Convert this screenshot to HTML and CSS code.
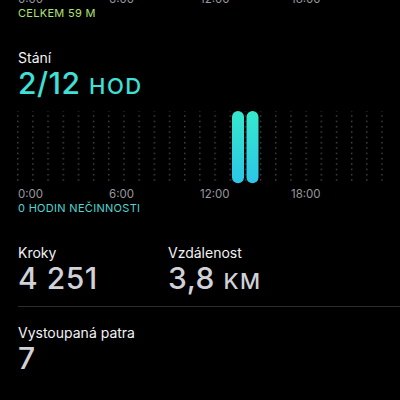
FILE: index.html
```html
<!DOCTYPE html>
<html lang="cs">
<head>
    <meta charset="UTF-8">
    <meta name="viewport" content="width=device-width, initial-scale=1.0">
    <title>Aktivita</title>
    <link rel="stylesheet" href="styles.css">
</head>
<body>
    <div class="page">
        <div class="axis axis-top">
            <span>0:00</span><span>6:00</span><span>12:00</span><span>18:00</span>
        </div>
        <div class="note note-green">CELKEM 59 M</div>

        <div class="label label-stand">Stání</div>
        <div class="ring-value">2/12 <span class="unit">HOD</span></div>

        <svg class="chart" width="366" height="76" viewBox="0 0 366 76">
            <defs>
                <pattern id="dots" patternUnits="userSpaceOnUse" width="15.18" height="5.33">
                    <rect x="0" y="0" width="1.4" height="1.4" fill="#4a4a4c"/>
                </pattern>
                <linearGradient id="standBar" x1="0" y1="0" x2="0" y2="1">
                    <stop offset="0" stop-color="#36e8cc"/>
                    <stop offset="1" stop-color="#2cc6e8"/>
                </linearGradient>
            </defs>
            <rect x="0" y="1" width="366" height="71" fill="url(#dots)"/>
            <rect x="215" y="1" width="12" height="72.3" rx="6" fill="url(#standBar)"/>
            <rect x="229.5" y="1" width="12" height="72.3" rx="6" fill="url(#standBar)"/>
        </svg>

        <div class="axis axis-bottom">
            <span>0:00</span><span>6:00</span><span>12:00</span><span>18:00</span>
        </div>
        <div class="note note-cyan">0 HODIN NEČINNOSTI</div>

        <div class="stats">
            <div class="stat">
                <div class="label">Kroky</div>
                <div class="stat-value">4 251</div>
            </div>
            <div class="stat">
                <div class="label">Vzdálenost</div>
                <div class="stat-value">3,8 <span class="unit">KM</span></div>
            </div>
        </div>
        <div class="divider"></div>
        <div class="stat stat-floors">
            <div class="label">Vystoupaná patra</div>
            <div class="stat-value">7</div>
        </div>
    </div>
</body>
</html>
```

FILE: styles.css
```css
body {
    margin: 0;
    padding: 0;
    background: #000;
    font-family: Inter, "Liberation Sans", sans-serif;
    overflow: hidden;
}
.page {
    padding-left: 18px;
    height: 400px;
}
.axis {
    display: grid;
    grid-template-columns: 91px 91px 91px 91px;
    font-size: 11.5px;
    line-height: 14px;
    color: #98989d;
}
.axis-top {
    margin-top: -8px;
}
.axis-bottom {
    margin-top: 1px;
}
.note {
    font-size: 11px;
    line-height: 14px;
    letter-spacing: 0.3px;
}
.note-green {
    color: #aee26e;
}
.note-cyan {
    color: #4fd6d2;
}
.label {
    font-size: 14px;
    line-height: 18px;
    color: #f2f2f4;
}
.label-stand {
    margin-top: 29px;
}
.ring-value {
    font-size: 30px;
    line-height: 32px;
    font-weight: 500;
    letter-spacing: 0.5px;
    color: #3fe0d8;
}
.unit {
    font-size: 22px;
    line-height: 0;
    letter-spacing: 1.5px;
}
.chart {
    display: block;
    margin-top: 11px;
    margin-left: -1px;
}
.stats {
    display: grid;
    grid-template-columns: 150px 1fr;
    margin-top: 29px;
}
.stat-value {
    font-size: 30px;
    line-height: 32px;
    font-weight: 500;
    letter-spacing: 0.5px;
    color: #d1d1d8;
}
.divider {
    height: 1px;
    background: #2c2c2e;
    margin-top: 12px;
}
.stat-floors {
    margin-top: 17px;
}
```
